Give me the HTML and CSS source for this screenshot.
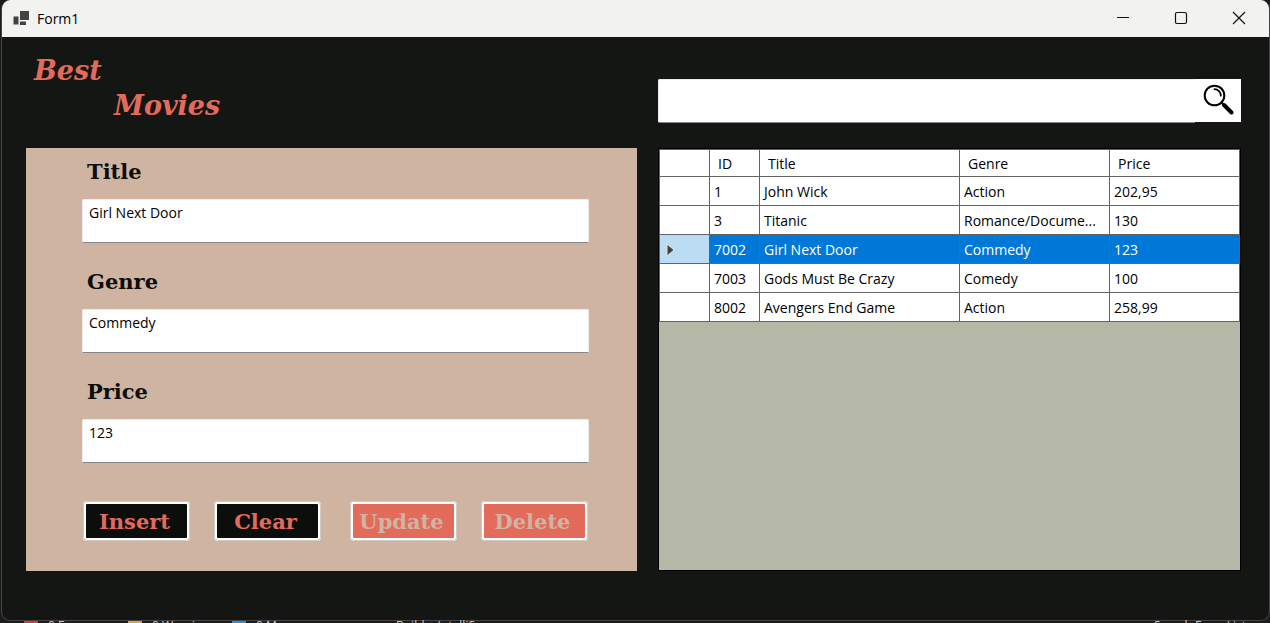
FILE: index.html
```html
<!DOCTYPE html>
<html lang="en">
<head>
<meta charset="utf-8">
<title>Form1</title>
<link rel="stylesheet" href="styles.css">
</head>
<body class="desktop">
<div class="window">
  <header class="titlebar">
    <svg class="app-icon" width="17" height="16" viewBox="0 0 17 16" aria-hidden="true">
      <path d="M7 0h9v9H7zM0.500 5.500h5v8h-5zM7 10.500h6v3.500H7z" fill="#424242"/>
    </svg>
    <span class="window-title">Form1</span>
    <button class="caption" type="button" aria-label="Minimize">
      <svg width="14" height="14" viewBox="0 0 14 14"><path d="M1 6.500h12" stroke="#111" fill="none"/></svg>
    </button>
    <button class="caption" type="button" aria-label="Maximize">
      <svg width="14" height="14" viewBox="0 0 14 14"><rect x="1.500" y="1.500" width="11" height="11" rx="1.500" stroke="#111" stroke-width="1.200" fill="none"/></svg>
    </button>
    <button class="caption" type="button" aria-label="Close">
      <svg width="14" height="14" viewBox="0 0 14 14"><path d="M1 1l12 12M13 1L1 13" stroke="#111" stroke-width="1.200" fill="none"/></svg>
    </button>
  </header>

  <main class="content">
    <div class="top">
      <h1 class="brand"><span>Best</span><span class="brand-second">Movies</span></h1>
      <form class="search">
        <input class="search-input" type="text" aria-label="Search movies">
        <button class="search-button" type="button" aria-label="Search">
          <svg width="32" height="32" viewBox="0 0 32 32">
            <circle cx="12.500" cy="12.500" r="9.800" fill="none" stroke="#000" stroke-width="2"/>
            <path d="M12.500 6.200a6.300 6.300 0 0 1 6.300 6.500" fill="none" stroke="#000" stroke-width="1.800" stroke-linecap="round"/>
            <path d="M19.300 19.300l3 3" stroke="#000" stroke-width="2"/>
            <path d="M22 22l7.500 7.500" stroke="#000" stroke-width="4" stroke-linecap="round"/>
          </svg>
        </button>
      </form>
    </div>

    <div class="panels">
      <form class="editor">
        <label class="label" for="title">Title</label>
        <input class="field" id="title" type="text" value="Girl Next Door">
        <label class="label" for="genre">Genre</label>
        <input class="field" id="genre" type="text" value="Commedy">
        <label class="label" for="price">Price</label>
        <input class="field" id="price" type="text" value="123">
        <div class="actions">
          <div class="action-pair">
            <button class="action" type="button">Insert</button>
            <button class="action" type="button">Clear</button>
          </div>
          <div class="action-pair">
            <button class="action" type="button" disabled>Update</button>
            <button class="action" type="button" disabled>Delete</button>
          </div>
        </div>
      </form>

      <section class="grid-view">
        <table class="movies">
          <colgroup><col class="col-mark"><col class="col-id"><col class="col-title"><col class="col-genre"><col></colgroup>
          <thead>
            <tr><th></th><th>ID</th><th>Title</th><th>Genre</th><th>Price</th></tr>
          </thead>
          <tbody>
            <tr><td></td><td>1</td><td>John Wick</td><td>Action</td><td>202,95</td></tr>
            <tr><td></td><td>3</td><td>Titanic</td><td>Romance/Docume...</td><td>130</td></tr>
            <tr class="selected"><td class="mark"><svg width="9" height="14" viewBox="0 0 9 14" aria-hidden="true"><path d="M1 1L8 7L1 13z" fill="#404040" stroke="#e8e4e0"/></svg></td><td>7002</td><td>Girl Next Door</td><td>Commedy</td><td>123</td></tr>
            <tr><td></td><td>7003</td><td>Gods Must Be Crazy</td><td>Comedy</td><td>100</td></tr>
            <tr><td></td><td>8002</td><td>Avengers End Game</td><td>Action</td><td>258,99</td></tr>
          </tbody>
        </table>
      </section>
    </div>
  </main>
</div>
<footer class="behind">
  <span class="dot red"></span><span class="count">0 Errors</span>
  <span class="dot yellow"></span><span class="count">0 Warnings</span>
  <span class="dot blue"></span><span class="count">0 Messages</span>
  <span class="source">Build + IntelliSense</span>
  <span class="find">Search Error List</span>
</footer>
</body>
</html>
```
FILE: styles.css
```css
* { box-sizing: border-box; }

.desktop {
  margin: 0;
  height: 100vh;
  overflow: hidden;
  display: flex;
  flex-direction: column;
  background: #1c1a1b;
  font: 14px/20px "Open Sans", "Noto Sans", sans-serif;
  color: #000;
}

.window {
  flex: 1;
  display: flex;
  flex-direction: column;
  margin-left: 1px;
  border: 1px solid #454545;
  border-top: 0;
  border-radius: 9px;
  overflow: hidden;
  background: #141614;
}

.titlebar {
  display: flex;
  align-items: center;
  height: 37px;
  padding: 0 1px 0 11px;
  background: #f2f3f1;
}
.app-icon { margin-right: 7px; }
.window-title { flex: 1; }
.caption {
  width: 58px;
  height: 37px;
  padding: 0 0 2px;
  border: 0;
  background: none;
  display: grid;
  place-items: center;
}

.content {
  flex: 1;
  display: flex;
  flex-direction: column;
  padding: 0 28px 49px 24px;
}
.top, .panels {
  display: grid;
  grid-template-columns: 611fr 583fr;
  column-gap: 21px;
}
.top { padding-bottom: 25px; }
.panels { flex: 1; }

.brand {
  margin: 0;
  padding: 16px 0 0 8px;
  font: italic bold 27px/35px "DejaVu Serif", serif;
  color: #e36b5b;
}
.brand span { display: block; }
.brand .brand-second { padding-left: 80px; }

.search {
  align-self: end;
  display: flex;
  height: 44px;
}
.search-input {
  flex: 1;
  min-width: 0;
  padding: 4px 6px;
  border: 1px solid #ececec;
  border-right: 0;
  border-bottom-color: #868686;
  border-radius: 2px 0 0 2px;
  background: #fff;
  font: inherit;
}
.search-button {
  width: 46px;
  height: 43px;
  padding: 0 0 4px;
  border: 0;
  background: #fff;
  display: grid;
  place-items: center;
}

.editor {
  display: flex;
  flex-direction: column;
  padding: 7px 48px 30px 56px;
  background: #d0b4a2;
}
.label {
  height: 44px;
  padding-left: 5px;
  font: bold 21px/34px "DejaVu Serif", serif;
  color: #0c0e0c;
}
.field {
  height: 44px;
  margin-bottom: 22px;
  padding: 2px 6px 20px;
  border: 1px solid #ececec;
  border-bottom-color: #868686;
  border-radius: 2px;
  background: #fff;
  font: inherit;
  color: #000;
}
.actions {
  display: flex;
  justify-content: space-between;
  margin-top: auto;
  padding: 0 1px;
}
.action-pair { display: flex; gap: 24px; }
.action {
  width: 107px;
  height: 40px;
  padding: 2px 4px 0 0;
  border: 3px solid #fff;
  border-radius: 4px;
  outline: 1px solid #d2c9c3;
  outline-offset: -1px;
  background: #0c0e0c;
  font: bold 21px/30px "DejaVu Serif", serif;
  color: #e36b5b;
}
.action:disabled { background: #e36b5b; color: #d0b4a2; }

.grid-view {
  border: 1px solid #000;
  background: #b5b8a7;
}
.movies {
  width: 100%;
  table-layout: fixed;
  border-collapse: separate;
  border-spacing: 0;
  background: #fff;
}
.col-mark { width: 51px; }
.col-id { width: 50px; }
.col-title { width: 200px; }
.col-genre { width: 150px; }
.movies th, .movies td {
  height: 29px;
  padding: 2px 4px 0;
  border: 0 solid #646464;
  border-width: 0 1px 1px 0;
  font-weight: normal;
  text-align: left;
  white-space: nowrap;
  overflow: hidden;
}
.movies th { height: 28px; padding: 2px 8px 0; border-top-width: 1px; }
.movies th:first-child, .movies td:first-child { border-left-width: 1px; }
.movies .selected td { background: #0078d7; color: #fff; }
.movies .selected .mark { background: #bcdcf4; border-right-color: #0078d7; padding-left: 6px; }
.mark svg { display: block; }

.behind {
  display: flex;
  align-items: flex-start;
  height: 2px;
  padding-left: 24px;
  font-size: 12px;
  line-height: 10px;
  color: #c8c8c8;
  white-space: nowrap;
}
.dot { width: 14px; height: 2px; margin-right: 10px; flex: none; }
.red { background: #c4404a; }
.yellow { background: #d0a848; }
.blue { background: #3c88c8; }
.count { width: 80px; }
.source { margin-left: 60px; }
.find { margin-left: auto; padding-right: 24px; }
```
